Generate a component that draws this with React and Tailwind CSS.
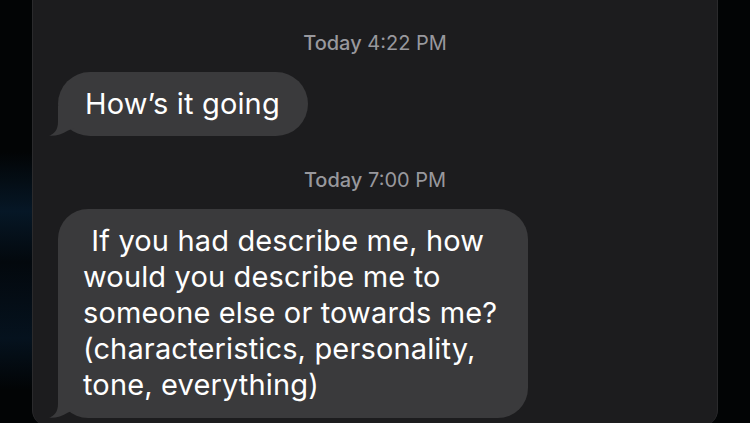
import React from "react";

const Tail = ({ className }) => (
  <svg
    className={className}
    width="26"
    height="30"
    viewBox="0 0 26 30"
    fill="#3a3a3c"
  >
    <path d="M9 0 L9 16 C9 24 5 28 0 29.6 C6 30.2 13 28.5 19 24.5 L26 22 L26 0 Z" />
  </svg>
);

const Stamp = ({ time, className }) => (
  <div className={`text-center text-[20px] leading-[24px] text-[#98989d] ${className}`}>
    <span className="font-medium">Today</span> {time}
  </div>
);

const App = () => {
  return (
    <div
      className="flex h-[423px] w-[750px] overflow-hidden bg-[#020405]"
      style={{ fontFamily: "Inter, 'Liberation Sans', sans-serif" }}
    >
      <div className="w-[32px] shrink-0 bg-[linear-gradient(180deg,#020405_0%,#020405_36%,#061726_50%,#03080d_62%,#05121e_80%,#020405_92%)]" />

      <div className="flex h-[426px] w-[686px] shrink-0 flex-col rounded-b-[16px] border-x border-[#2a2a2c] bg-[#1c1c1e] pl-[25px]">
        <Stamp time="4:22 PM" className="mt-[31px] -ml-[25px]" />

        <div className="relative mt-[17px] self-start">
          <div className="rounded-[32px] bg-[#3a3a3c] pl-[27px] pr-[28px] py-[14px] text-[29px] leading-[36px] tracking-[0.15px] text-white whitespace-nowrap">
            How’s it going
          </div>
          <Tail className="absolute -left-[9px] bottom-0" />
        </div>

        <Stamp time="7:00 PM" className="mt-[32px] -ml-[25px]" />

        <div className="relative mt-[17px] w-[470px]">
          <div className="rounded-[30px] bg-[#3a3a3c] pl-[25px] pt-[14px] pb-[15px] text-[29px] leading-[36px] tracking-[0.15px] text-white whitespace-nowrap">
            &nbsp;If you had describe me, how
            <br />
            would you describe me to
            <br />
            someone else or towards me?
            <br />
            (characteristics, personality,
            <br />
            tone, everything)
          </div>
          <Tail className="absolute -left-[9px] bottom-0" />
        </div>
      </div>

      <div className="w-[32px] shrink-0 bg-[#020405]" />
    </div>
  );
};

export default App;
